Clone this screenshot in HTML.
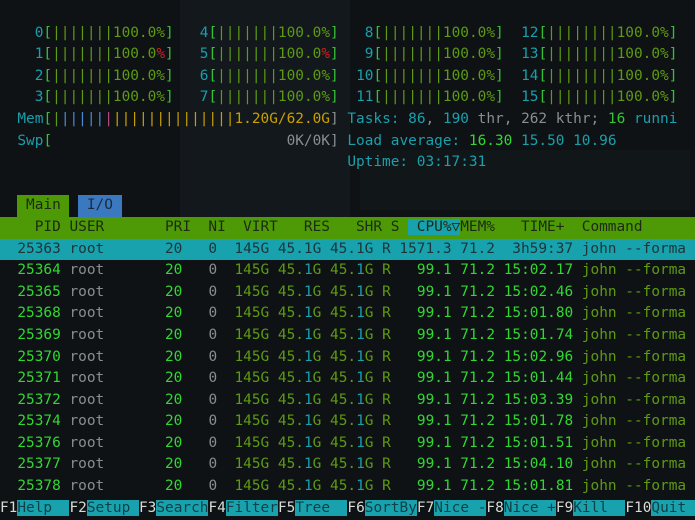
<!DOCTYPE html>
<html><head><meta charset="utf-8"><style>
html,body{margin:0;padding:0;background:#0e1215;width:695px;height:520px;overflow:hidden}
pre{margin:0;position:absolute;left:0;top:1px;font-family:"DejaVu Sans Mono","Liberation Mono",monospace;font-size:14.43px;line-height:21.6px;color:#8c9094;white-space:pre}
.c{color:#1a9fab}.g{color:#33d633}.o{color:#5e9a12}.br{color:#36c236}.gr{color:#8a8e90}
.y{color:#c8a000}.b{color:#4a8ad0}.m{color:#b04a80}.r{color:#d02020}
.hd{background:#4e9a06;color:#1d2a14;display:inline-block;width:695px}
.sel{background:#17a2ae;color:#1d3538;display:inline-block;width:695px}
.cp{background:#17a2ae}
.tm,.ti{display:inline-block;height:21.6px;vertical-align:top}
.tm{background:#4e9a06;color:#1d2a14}.ti{background:#3a78c0;color:#1d2a3a}
.fk{color:#d8dcd8}.fl{background:#17a2ae;color:#104048}
.bg1{position:absolute;background:#161c20}
</style></head><body>
<div class="bg1" style="left:180px;top:0;width:170px;height:240px;background:#12181b"></div>
<div class="bg1" style="left:360px;top:150px;width:330px;height:60px;background:#111619"></div>
<pre>

    <span class="c">0</span><span class="br">[</span><span class="o">|||||||100.0%</span><span class="br">]</span>   <span class="c">4</span><span class="br">[</span><span class="o">|||||||100.0%</span><span class="br">]</span>   <span class="c">8</span><span class="br">[</span><span class="o">|||||||100.0%</span><span class="br">]</span>  <span class="c">12</span><span class="br">[</span><span class="o">||||||||100.0%</span><span class="br">]</span>
    <span class="c">1</span><span class="br">[</span><span class="o">|||||||100.0</span><span class="r">%</span><span class="br">]</span>   <span class="c">5</span><span class="br">[</span><span class="o">|||||||100.0</span><span class="r">%</span><span class="br">]</span>   <span class="c">9</span><span class="br">[</span><span class="o">|||||||100.0%</span><span class="br">]</span>  <span class="c">13</span><span class="br">[</span><span class="o">||||||||100.0%</span><span class="br">]</span>
    <span class="c">2</span><span class="br">[</span><span class="o">|||||||100.0%</span><span class="br">]</span>   <span class="c">6</span><span class="br">[</span><span class="o">|||||||100.0%</span><span class="br">]</span>  <span class="c">10</span><span class="br">[</span><span class="o">|||||||100.0%</span><span class="br">]</span>  <span class="c">14</span><span class="br">[</span><span class="o">||||||||100.0%</span><span class="br">]</span>
    <span class="c">3</span><span class="br">[</span><span class="o">|||||||100.0%</span><span class="br">]</span>   <span class="c">7</span><span class="br">[</span><span class="o">|||||||100.0%</span><span class="br">]</span>  <span class="c">11</span><span class="br">[</span><span class="o">|||||||100.0%</span><span class="br">]</span>  <span class="c">15</span><span class="br">[</span><span class="o">||||||||100.0%</span><span class="br">]</span>
  <span class="c">Mem</span><span class="br">[</span><span class="o">|</span><span class="b">|||||</span><span class="m">|</span><span class="y">||||||||||||||1.20G/62.0G</span><span class="gr">]</span> <span class="c">Tasks: 86</span><span class="gr">, </span><span class="c">190</span><span class="gr"> thr, 262 kthr; </span><span class="br">16</span><span class="c"> runni</span>
  <span class="c">Swp</span><span class="br">[</span>                           <span class="gr">0K/0K]</span> <span class="c">Load average: </span><span class="g">16.30</span> <span class="c">15.50 10.96</span>
                                        <span class="c">Uptime: 03:17:31</span>

  <span class="tm"> Main </span> <span class="ti"> I/O </span>
<span class="hd">    PID USER       PRI  NI  VIRT   RES   SHR S <span class="cp"> CPU%▽</span>MEM%   TIME+  Command</span>
<span class="sel">  25363 root       20   0  145G 45.1G 45.1G R 1571.3 71.2  3h59:37 john --forma</span>
  <span class="g">25364</span> <span class="gr">root</span>       <span class="g">20</span>   <span class="gr">0</span>  <span class="o">145G 45.<span class="c">1</span>G 45.<span class="c">1</span>G R</span>   <span class="g">99.1 71.2 15:02.17</span> <span class="o">john --forma</span>
  <span class="g">25365</span> <span class="gr">root</span>       <span class="g">20</span>   <span class="gr">0</span>  <span class="o">145G 45.<span class="c">1</span>G 45.<span class="c">1</span>G R</span>   <span class="g">99.1 71.2 15:02.46</span> <span class="o">john --forma</span>
  <span class="g">25368</span> <span class="gr">root</span>       <span class="g">20</span>   <span class="gr">0</span>  <span class="o">145G 45.<span class="c">1</span>G 45.<span class="c">1</span>G R</span>   <span class="g">99.1 71.2 15:01.80</span> <span class="o">john --forma</span>
  <span class="g">25369</span> <span class="gr">root</span>       <span class="g">20</span>   <span class="gr">0</span>  <span class="o">145G 45.<span class="c">1</span>G 45.<span class="c">1</span>G R</span>   <span class="g">99.1 71.2 15:01.74</span> <span class="o">john --forma</span>
  <span class="g">25370</span> <span class="gr">root</span>       <span class="g">20</span>   <span class="gr">0</span>  <span class="o">145G 45.<span class="c">1</span>G 45.<span class="c">1</span>G R</span>   <span class="g">99.1 71.2 15:02.96</span> <span class="o">john --forma</span>
  <span class="g">25371</span> <span class="gr">root</span>       <span class="g">20</span>   <span class="gr">0</span>  <span class="o">145G 45.<span class="c">1</span>G 45.<span class="c">1</span>G R</span>   <span class="g">99.1 71.2 15:01.44</span> <span class="o">john --forma</span>
  <span class="g">25372</span> <span class="gr">root</span>       <span class="g">20</span>   <span class="gr">0</span>  <span class="o">145G 45.<span class="c">1</span>G 45.<span class="c">1</span>G R</span>   <span class="g">99.1 71.2 15:03.39</span> <span class="o">john --forma</span>
  <span class="g">25374</span> <span class="gr">root</span>       <span class="g">20</span>   <span class="gr">0</span>  <span class="o">145G 45.<span class="c">1</span>G 45.<span class="c">1</span>G R</span>   <span class="g">99.1 71.2 15:01.78</span> <span class="o">john --forma</span>
  <span class="g">25376</span> <span class="gr">root</span>       <span class="g">20</span>   <span class="gr">0</span>  <span class="o">145G 45.<span class="c">1</span>G 45.<span class="c">1</span>G R</span>   <span class="g">99.1 71.2 15:01.51</span> <span class="o">john --forma</span>
  <span class="g">25377</span> <span class="gr">root</span>       <span class="g">20</span>   <span class="gr">0</span>  <span class="o">145G 45.<span class="c">1</span>G 45.<span class="c">1</span>G R</span>   <span class="g">99.1 71.2 15:04.10</span> <span class="o">john --forma</span>
  <span class="g">25378</span> <span class="gr">root</span>       <span class="g">20</span>   <span class="gr">0</span>  <span class="o">145G 45.<span class="c">1</span>G 45.<span class="c">1</span>G R</span>   <span class="g">99.1 71.2 15:01.81</span> <span class="o">john --forma</span>
<span class="fk">F1</span><span class="fl">Help  </span><span class="fk">F2</span><span class="fl">Setup </span><span class="fk">F3</span><span class="fl">Search</span><span class="fk">F4</span><span class="fl">Filter</span><span class="fk">F5</span><span class="fl">Tree  </span><span class="fk">F6</span><span class="fl">SortBy</span><span class="fk">F7</span><span class="fl">Nice -</span><span class="fk">F8</span><span class="fl">Nice +</span><span class="fk">F9</span><span class="fl">Kill  </span><span class="fk">F10</span><span class="fl">Quit  </span></pre>
</body></html>
